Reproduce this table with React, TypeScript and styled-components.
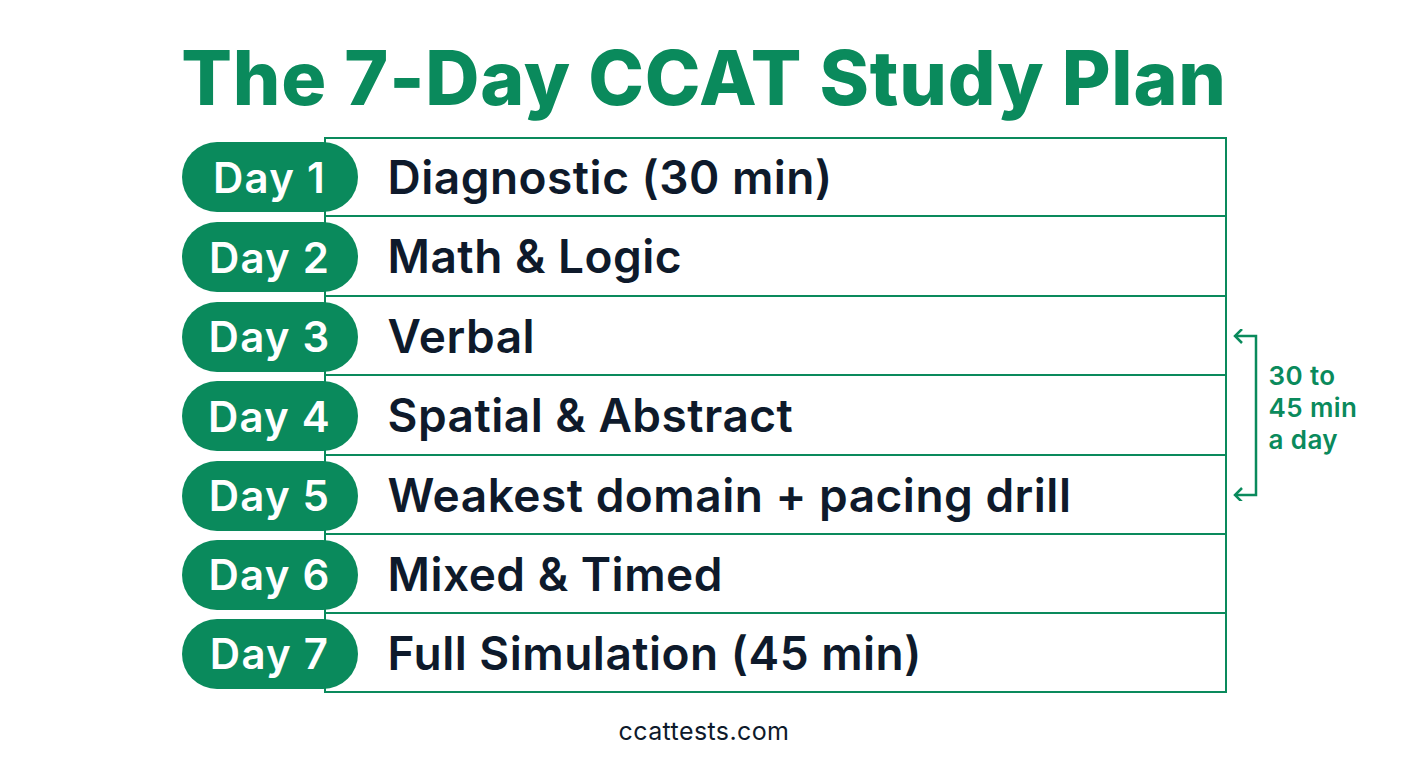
import React from 'react';
import styled, { createGlobalStyle } from 'styled-components';

const GREEN = '#0a8a5c';
const INK = '#0e1a2b';

const GlobalStyle = createGlobalStyle`
  html, body {
    margin: 0;
    padding: 0;
    background: #ffffff;
  }
  body {
    font-family: Inter, "Noto Sans", "DejaVu Sans", sans-serif;
  }
`;

const Page = styled.div`
  width: 1408px;
  height: 768px;
  display: flex;
  flex-direction: column;
  align-items: center;
  box-sizing: border-box;
  padding-top: 30px;
`;

const Title = styled.h1`
  margin: 0;
  height: 107px;
  font-size: 75px;
  line-height: 96px;
  font-weight: 800;
  letter-spacing: 0.8px;
  color: ${GREEN};
`;

const Board = styled.div`
  width: 100%;
  display: grid;
  grid-template-columns: 1fr 1045px 1fr;
`;

const Plan = styled.div`
  grid-column: 2;
  display: flex;
  flex-direction: column;
`;

const Row = styled.div<{ $height: number }>`
  display: flex;
  align-items: center;
  height: ${(p) => p.$height}px;
`;

const Pill = styled.div`
  position: relative;
  z-index: 1;
  flex: none;
  width: 176px;
  height: 70px;
  margin-right: -34px;
  border-radius: 35px;
  background: ${GREEN};
  color: #ffffff;
  display: flex;
  align-items: center;
  justify-content: center;
  font-size: 42px;
  font-weight: 600;
  letter-spacing: 1.2px;
`;

const Cell = styled.div<{ $first?: boolean }>`
  flex: 1;
  align-self: stretch;
  display: flex;
  align-items: center;
  box-sizing: border-box;
  padding-left: 62px;
  border: 2px solid ${GREEN};
  border-top-width: ${(p) => (p.$first ? 2 : 0)}px;
  color: ${INK};
  font-size: 46px;
  font-weight: 600;
  letter-spacing: 0.5px;
`;

const Note = styled.div`
  grid-column: 3;
  display: flex;
  align-items: center;
  align-self: start;
  margin-top: 192px;
`;

const NoteText = styled.div`
  margin-left: 6px;
  margin-bottom: 14px;
  color: ${GREEN};
  font-size: 26px;
  line-height: 32px;
  font-weight: 600;
  letter-spacing: 0.4px;
`;

const Footer = styled.div`
  margin-top: 23px;
  color: ${INK};
  font-size: 25px;
  font-weight: 400;
  letter-spacing: 0.4px;
`;

const days = [
  { text: 'Diagnostic (30 min)', h: 80 },
  { text: 'Math & Logic', h: 80 },
  { text: 'Verbal', h: 79 },
  { text: 'Spatial & Abstract', h: 80 },
  { text: 'Weakest domain + pacing drill', h: 79 },
  { text: 'Mixed & Timed', h: 79 },
  { text: 'Full Simulation (45 min)', h: 79 },
];

const Bracket = () => (
  <svg width="36" height="172" viewBox="0 0 36 172" fill="none">
    <path d="M8 7 H29 V166 H8" stroke={GREEN} strokeWidth="2.5" />
    <path d="M15 0 L8 7 L15 14" stroke={GREEN} strokeWidth="2.5" />
    <path d="M15 159 L8 166 L15 173" stroke={GREEN} strokeWidth="2.5" />
  </svg>
);

const App = () => {
  return (
    <Page>
      <GlobalStyle />
      <Title>The 7-Day CCAT Study Plan</Title>
      <Board>
        <Plan>
          {days.map((d, i) => (
            <Row key={d.text} $height={d.h}>
              <Pill>Day {i + 1}</Pill>
              <Cell $first={i === 0}>{d.text}</Cell>
            </Row>
          ))}
        </Plan>
        <Note>
          <Bracket />
          <NoteText>
            30 to
            <br />
            45 min
            <br />a day
          </NoteText>
        </Note>
      </Board>
      <Footer>ccattests.com</Footer>
    </Page>
  );
};

export default App;
